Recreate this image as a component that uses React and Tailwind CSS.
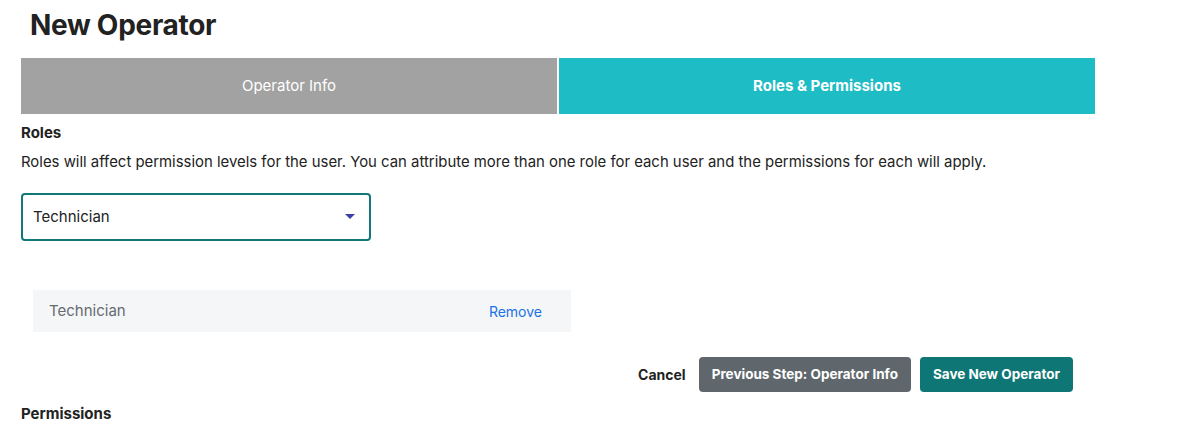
import React, { useState } from 'react';

const App = () => {
    const [roles, setRoles] = useState(['Technician']);
    const [selected, setSelected] = useState('Technician');

    return (
        <div className="min-h-screen bg-white font-['Inter',sans-serif] text-[#222]">
            <div className="w-[1074px] ml-[21px]">
                <h1 className="pl-[9px] pt-[9px] h-[58px] text-[28px] font-bold tracking-[-0.3px] leading-[32px]">New Operator</h1>

                <div className="flex h-[56px] gap-[2px]">
                    <div className="flex-1 bg-[#a2a2a2] text-white text-[15px] flex items-center justify-center">
                        Operator Info
                    </div>
                    <div className="flex-1 bg-[#1ebcc5] text-white text-[15px] font-bold flex items-center justify-center">
                        Roles &amp; Permissions
                    </div>
                </div>

                <h2 className="mt-[10px] text-[15px] font-bold leading-[18px]">Roles</h2>
                <p className="mt-[11px] text-[14.9px] leading-[18px] text-[#222]">
                    Roles will affect permission levels for the user. You can attribute more than one role for each user and the permissions for each will apply.
                </p>

                <div className="mt-[22px] w-[350px] h-[48px] border-2 border-[#107878] rounded-[4px] flex items-center justify-between pl-[10px] pr-[14px]">
                    <span className="text-[15px] text-[#222]">{selected}</span>
                    <svg width="10" height="6" viewBox="0 0 10 6">
                        <path d="M0 0h10L5 5z" fill="#3b3fa8" />
                    </svg>
                </div>

                <div className="mt-[49px] ml-[12px] w-[538px]">
                    {roles.map(r => (
                        <div key={r} className="h-[42px] bg-[#f5f6f8] flex items-center justify-between pl-[16px] pr-[29px]">
                            <span className="text-[15px] text-[#666b70]">{r}</span>
                            <button
                                className="text-[14px] text-[#1a73e8]"
                                onClick={() => setRoles(roles.filter(x => x !== r))}
                            >
                                Remove
                            </button>
                        </div>
                    ))}
                </div>

                <div className="mt-[25px] flex justify-end items-center gap-[9px] pr-[22px]">
                    <button className="text-[14px] font-bold text-[#222] mr-[4px]">Cancel</button>
                    <button className="h-[35px] px-[13px] rounded-[4px] bg-[#5f676d] text-white text-[13.5px] font-bold">
                        Previous Step: Operator Info
                    </button>
                    <button className="h-[35px] px-[13px] rounded-[4px] bg-[#0f7676] text-white text-[13.5px] font-bold">
                        Save New Operator
                    </button>
                </div>

                <h2 className="mt-[13px] text-[15px] font-bold leading-[18px]">Permissions</h2>
            </div>
        </div>
    );
};

export default App;
